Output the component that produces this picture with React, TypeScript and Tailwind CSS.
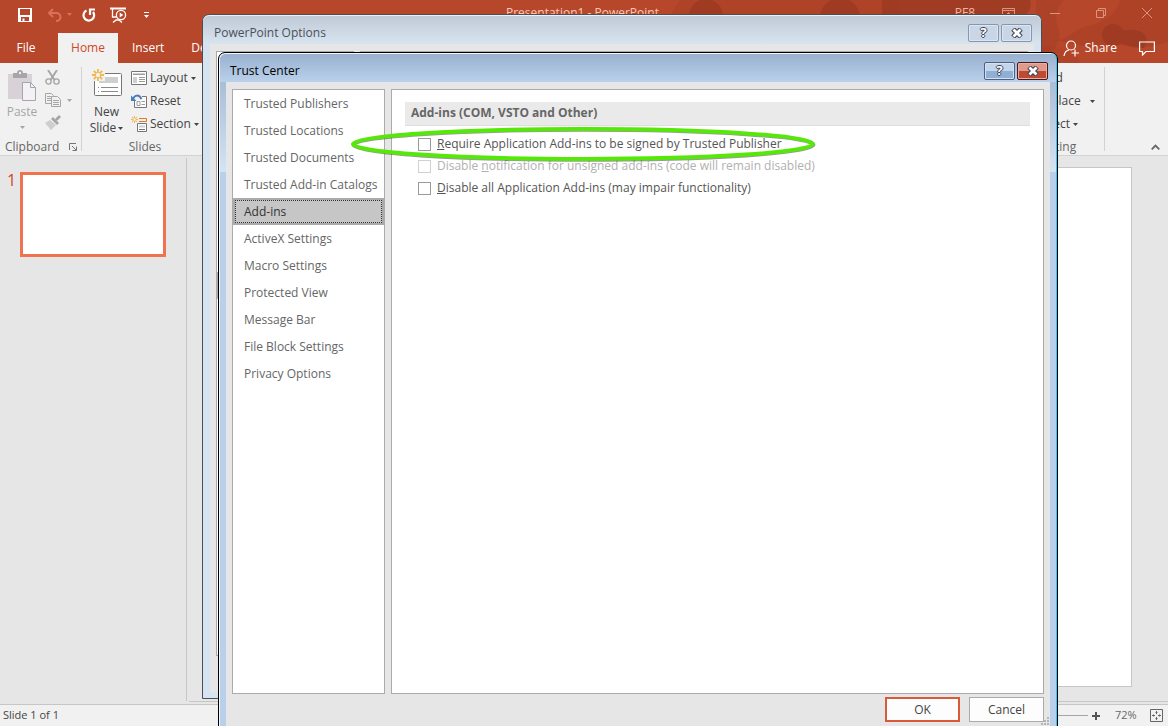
import React, { useState } from 'react';
import clsx from 'clsx';

const categories = [
  'Trusted Publishers',
  'Trusted Locations',
  'Trusted Documents',
  'Trusted Add-in Catalogs',
  'Add-ins',
  'ActiveX Settings',
  'Macro Settings',
  'Protected View',
  'Message Bar',
  'File Block Settings',
  'Privacy Options',
];

const Caret: React.FC<{ className?: string }> = ({ className }) => (
  <svg width="5" height="3" viewBox="0 0 5 3" className={clsx('shrink-0', className)} fill="currentColor">
    <path d="M0 0h5L2.5 3z" />
  </svg>
);

const SaveIcon = () => (
  <svg width="14" height="14" viewBox="0 0 14 14" fill="#fff">
    <path fillRule="evenodd" d="M0 0h14v14H0zM2 1v6h10V1zM3 9v4h1.500v-2.500h2V13H11V9z" />
  </svg>
);

const UndoIcon = () => (
  <svg width="15" height="14" viewBox="0 0 15 14" fill="none" stroke="#d9705a" strokeWidth="2">
    <path d="M6 1L2 5l4 4" />
    <path d="M2 5h7a4 4 0 0 1 4.500 4c0 2-1.500 4-4.500 4" />
  </svg>
);

const RedoIcon = () => (
  <svg width="14" height="14" viewBox="0 0 14 14" fill="none" stroke="#fff" strokeWidth="2.200">
    <path d="M4.500 2.500A5.300 5.300 0 1 0 11 4" />
    <path d="M8 7V1.500h5" />
  </svg>
);

const SlideShowIcon = () => (
  <svg width="17" height="16" viewBox="0 0 17 16" fill="none" stroke="#fff">
    <path d="M0 1.500h16" strokeWidth="2" />
    <path d="M2.500 2v8H7" strokeWidth="1.300" />
    <path d="M3 15.500L6 13h3l3 2.500" strokeWidth="1.300" />
    <circle cx="11" cy="8" r="4.600" fill="#b7472a" strokeWidth="1.300" />
    <path d="M9.700 5.500v5l3.600-2.500z" fill="#fff" stroke="none" />
  </svg>
);

const PasteIcon = () => (
  <svg width="28" height="31" viewBox="0 0 28 31">
    <path d="M0 4h24v25H0z" fill="#d8d2d8" />
    <path d="M5 3h4a3 3 0 0 1 6 0h4v5H5z" fill="#a6a6a6" />
    <circle cx="12" cy="3" r="1.200" fill="#f1f1f1" />
    <path d="M14.500 12.500h8l5 5v13h-13z" fill="#f4f0f8" stroke="#a6a6a6" />
    <path d="M22.500 12.500v5h5" fill="none" stroke="#a6a6a6" />
  </svg>
);

const CutIcon = () => (
  <svg width="15" height="15" viewBox="0 0 15 15" fill="none" stroke="#a6a6a6" strokeWidth="1.400">
    <path d="M3 0l6.500 10M12 0L5.500 10" strokeWidth="2" />
    <circle cx="3.500" cy="11.500" r="2.600" />
    <circle cx="11.500" cy="11.500" r="2.600" />
  </svg>
);

const CopyIcon = () => (
  <svg width="16" height="14" viewBox="0 0 16 14" fill="#f1f1f1" stroke="#a6a6a6">
    <path d="M.5.5h6l2 2v8h-8z" />
    <path d="M2 3.500h4M2 5.500h4M2 7.500h4" />
    <path d="M6.500 3.500h6l3 3v7h-9z" />
    <path d="M8 7.500h6M8 9.500h6M8 11.500h6" />
  </svg>
);

const PainterIcon = () => (
  <svg width="16" height="15" viewBox="0 0 16 15">
    <path d="M0 8l5-3 6 5-5 5z" fill="#d0ccd0" />
    <path d="M6 4l2-2 6 6-2 2z" fill="#a6a6a6" />
    <path d="M10 4l4-4 2 2-4 4z" fill="#a6a6a6" />
  </svg>
);

const Spark: React.FC<{ size: number }> = ({ size }) => (
  <svg width={size} height={size} viewBox="0 0 12 12" stroke="#f0b94d" strokeWidth="1.800" x="0" y="0">
    <path d="M6 0v4M6 8v4M0 6h4M8 6h4M1.800 1.800l2.700 2.700M7.500 7.500l2.700 2.700M10.200 1.800L7.500 4.500M4.500 7.500L1.800 10.200" />
  </svg>
);

const NewSlideIcon = () => (
  <svg width="30" height="28" viewBox="0 0 30 28" fill="none">
    <rect x="2.500" y="4.500" width="27" height="22" rx="1" fill="#fff" stroke="#767676" />
    <path d="M7 8h19v6H7z" fill="#cfcfcf" />
    <path d="M9 18.500h17M9 22.500h17M6 18.500h1M6 22.500h1" stroke="#8a8a8a" />
    <path d="M0 0h13v12H0z" fill="#f1f1f1" />
    <Spark size={12} />
  </svg>
);

const LayoutIcon = () => (
  <svg width="16" height="14" viewBox="0 0 16 14" fill="none" stroke="#767676">
    <path d="M.5.5h15v13H.5z" fill="#fff" />
    <path d="M2 2h12v2H2zM2 6h4v6H2z" fill="#cfcfcf" stroke="none" />
    <path d="M2 3.500h12M8 6.500h6M8 8.500h6M8 10.500h6" stroke="#9a9a9a" />
  </svg>
);

const ResetIcon = () => (
  <svg width="16" height="14" viewBox="0 0 16 14" fill="none" stroke="#767676">
    <path d="M3.500 2.500h12v11h-12z" fill="#fff" />
    <path d="M6 7.500h3v4H6zM10.500 7.500H14M10.500 10.500H14" stroke="#9a9a9a" />
    <path d="M0 0h11v6H0z" fill="#f1f1f1" stroke="none" />
    <path d="M2 5C3.500 1 8 0 10.500 5" stroke="#4a80b8" strokeWidth="2" />
    <path d="M0 1.500V7h5.500z" fill="#4a80b8" stroke="none" />
  </svg>
);

const SectionIcon = () => (
  <svg width="16" height="16" viewBox="0 0 16 16" fill="none">
    <Spark size={7} />
    <path d="M8 2.500h7.500v3H8" stroke="#e07b22" />
    <path d="M6.500 7.500h9v8h-9z" fill="#fff" stroke="#767676" />
    <path d="M8 9.500h6v2H8z" fill="#cfcfcf" />
    <path d="M8 13.500h6" stroke="#767676" />
  </svg>
);

const CaptionButtons: React.FC<{ active?: boolean }> = ({ active }) => (
  <div className="flex gap-[2px]">
    <button
      aria-label="Help"
      className={clsx(
        'flex h-[18px] w-[31px] items-center justify-center rounded-[2px] border text-[13px] font-bold text-white [text-shadow:1px_0_0_#3f4659,-1px_0_0_#3f4659,0_1px_0_#3f4659,0_-1px_0_#3f4659]',
        active
          ? 'border-[#4c6183] bg-linear-to-b from-[#c3d5ea] from-50% to-[#8fb0d4] to-50% shadow-[inset_0_0_0_1px_#d3e1f1]'
          : 'border-[#8796b0] bg-[#c9d6e5] shadow-[inset_0_0_0_1px_#dde6f0]'
      )}
    >
      ?
    </button>
    <button
      aria-label="Close"
      className={clsx(
        'flex h-[18px] w-[31px] items-center justify-center rounded-[2px] border',
        active
          ? 'border-[#471a20] bg-linear-to-b from-[#e09a8c] from-50% to-[#c04a30] to-50% shadow-[inset_0_0_0_1px_#e8b0a5]'
          : 'border-[#8796b0] bg-[#c9d6e5] shadow-[inset_0_0_0_1px_#dde6f0]'
      )}
    >
      <svg width="12" height="10" viewBox="0 0 12 10" fill="none">
        <path d="M2 1l8 8M10 1l-8 8" stroke="#3f4659" strokeWidth="5" />
        <path d="M2.500 1.500l7 7M9.500 1.500l-7 7" stroke="#fff" strokeWidth="2.800" />
      </svg>
    </button>
  </div>
);

const TitleBar = () => (
  <header className="relative bg-[#b7472a] text-white">
    {/* circle pattern behind the title area */}
    <svg className="absolute right-0 top-0 h-[63px] w-[508px]" viewBox="0 0 508 63" fill="#9f3b23">
      <path d="M20 0h220v16H10z" opacity=".35" />
      <circle cx="46" cy="16" r="17" opacity=".9" />
      <circle cx="180" cy="18" r="20" />
      <path d="M222 0h148c2 6 0 12-6 16H222z" opacity=".9" />
      <path d="M376 0h28c-8 8-10 18-6 26 4 12 0 24-12 26h-10z" opacity=".45" />
      <path d="M396 40c14 0 18-12 32-14 14-4 28-10 32-26h48v42c-16 6-30 6-44 2-12 4-30 6-68-4z" opacity=".4" />
      <circle cx="453" cy="35" r="11" />
      <path d="M448 36c14-8 30-8 36-2 4 4 2 10 0 14-12 0-28-4-36-12z" />
      <path d="M376 50c10-6 24-4 30 2 6-2 12 2 14 11h-44z" opacity=".25" />
    </svg>
    <div className="relative flex h-[33px] items-start">
      <div className="flex h-[29px] items-center pl-[18px]">
        <button aria-label="Save"><SaveIcon /></button>
        <button aria-label="Undo" className="ml-[15px] flex items-center gap-[5px] text-[#d9705a]">
          <UndoIcon />
          <Caret />
        </button>
        <button aria-label="Repeat" className="ml-[10px]"><RedoIcon /></button>
        <button aria-label="Start From Beginning" className="ml-[14px]"><SlideShowIcon /></button>
        <button aria-label="Customize Quick Access Toolbar" className="ml-[17px] flex flex-col gap-[2px]">
          <span className="h-px w-[5px] bg-white" />
          <Caret />
        </button>
      </div>
      <div className="flex-1 pl-[357px] pt-[5px] leading-4 text-[#f8c9b8]">Presentation1 - PowerPoint</div>
      <div className="flex items-start pt-[5px] leading-4 text-[#f0b5a3]">
        <span>PF8</span>
        <div className="flex h-[16px] items-center pl-[27px] pr-[16px] text-[#dc9480]">
          <button aria-label="Ribbon Display Options">
            <svg width="13" height="10" viewBox="0 0 13 10" fill="none" stroke="currentColor">
              <path d="M.5.5h12v9H.5zM.5 2.500h12M6.500 9V4.500M4.500 6.500l2-2 2 2" />
            </svg>
          </button>
          <button aria-label="Minimize" className="ml-[35px] h-px w-[10px] bg-current" />
          <button aria-label="Restore" className="ml-[36px]">
            <svg width="10" height="10" viewBox="0 0 10 10" fill="none" stroke="currentColor">
              <path d="M.5 2.500h7v7h-7zM2.500 2V.5h7v7H8" />
            </svg>
          </button>
          <button aria-label="Close" className="ml-[36px]">
            <svg width="10" height="10" viewBox="0 0 10 10" stroke="currentColor">
              <path d="M0 0l10 10M10 0L0 10" />
            </svg>
          </button>
        </div>
      </div>
    </div>
    <nav className="relative flex h-[30px] items-stretch">
      <button className="w-[58px] pr-[6px]">File</button>
      <button className="w-[60px] bg-[#f1f1f1] text-[#d24726]">Home</button>
      <button className="px-[14px]">Insert</button>
      <button className="px-[13px]">Design</button>
      <div className="flex-1" />
      <button className="flex items-center gap-[6px]">
        <svg width="16" height="17" viewBox="0 0 16 17" fill="none" stroke="#fff" strokeWidth="1.200">
          <circle cx="8" cy="5.500" r="4.500" />
          <path d="M1 16c.5-3.500 2.500-5.500 5-6M12 9.500v7M8.500 13H16" />
        </svg>
        Share
      </button>
      <button aria-label="Comments" className="ml-[22px] mr-[13px]">
        <svg width="16" height="15" viewBox="0 0 16 15" fill="none" stroke="#fff" strokeWidth="1.200">
          <path d="M.6 1h14.800v9.500H7L3.500 14v-3.500H.6z" />
        </svg>
      </button>
    </nav>
  </header>
);

const Ribbon = () => (
  <div className="flex h-[93px] border-b border-[#d2d2d2] bg-[#f1f1f1] text-[#444]">
    <section className="flex w-[81px] flex-col">
      <div className="flex h-[76px] items-start pt-[7px] text-[#a6a6a6]">
        <button className="flex w-[43px] flex-col items-center pl-px">
          <PasteIcon />
          <span className="pt-[3px] leading-4">Paste</span>
          <Caret className="mt-[6px]" />
        </button>
        <div className="flex flex-col gap-[8px] pl-[2px]">
          <button aria-label="Cut"><CutIcon /></button>
          <button aria-label="Copy" className="flex items-center gap-[6px]">
            <CopyIcon />
            <Caret />
          </button>
          <button aria-label="Format Painter"><PainterIcon /></button>
        </div>
      </div>
      <div className="flex items-center justify-between pl-[5px] pr-[4px] leading-4 text-[#666]">
        Clipboard
        <svg width="8" height="8" viewBox="0 0 8 8" fill="none" stroke="#767676">
          <path d="M.5 7V.5H7M3 3l4 4M7.500 3.500v4h-4" />
        </svg>
      </div>
    </section>
    <div className="my-[4px] w-px bg-[#d2d2d2]" />
    <section className="flex w-[126px] flex-col">
      <div className="flex h-[76px] items-start pt-[6px]">
        <button className="flex w-[49px] flex-col items-center">
          <NewSlideIcon />
          <span className="pt-[7px] leading-4">New</span>
          <span className="flex items-center gap-[2px] leading-4">Slide <Caret /></span>
        </button>
        <div className="flex flex-col gap-[7px] pt-px">
          <button className="flex items-center gap-[3px] leading-4"><LayoutIcon />Layout <Caret /></button>
          <button className="flex items-center gap-[3px] leading-4"><ResetIcon />Reset</button>
          <button className="flex items-center gap-[3px] leading-4"><SectionIcon />Section <Caret /></button>
        </div>
      </div>
      <div className="text-center leading-4 text-[#666]">Slides</div>
    </section>
    <div className="flex-1" />
    <section className="flex w-[70px] flex-col">
      <div className="flex h-[76px] flex-col items-start gap-[7px] pl-[3px] pt-[7px]">
        <button className="pl-[2px] leading-4">Find</button>
        <button className="flex items-center gap-[9px] leading-4">Replace <Caret /></button>
        <button className="flex items-center gap-[3px] leading-4">Select <Caret /></button>
      </div>
      <div className="pl-[4px] leading-4 text-[#666]">Editing</div>
    </section>
    <div className="my-[4px] w-px bg-[#d2d2d2]" />
    <div className="flex w-[63px] items-end justify-end pb-[5px] pr-[8px]">
      <button aria-label="Collapse the Ribbon">
        <svg width="9" height="6" viewBox="0 0 9 6" fill="none" stroke="#666" strokeWidth="1.800">
          <path d="M.7 5.300L4.500 1.500l3.800 3.800" />
        </svg>
      </button>
    </div>
  </div>
);

const Workspace = () => (
  <main className="flex flex-1 bg-[#e6e6e6] pt-[2px]">
    <aside className="mb-[3px] flex w-[187px] items-start gap-[4px] border-r border-[#c6c6c6] pl-[7px] pt-[14px]">
      <span className="text-base leading-4 text-[#d24726]">1</span>
      <div className="h-[85px] w-[146px] border-3 border-[#f07350] bg-white" />
    </aside>
    <div className="mb-[2px] ml-[2px] flex flex-1 border-b border-[#c6c6c6] pb-[14px] pl-[64px] pr-[36px] pt-[9px]">
      <div className="flex-1 border border-[#c6c6c6] bg-white" />
    </div>
  </main>
);

const StatusBar = () => (
  <footer className="flex h-[22px] items-center border-t border-[#c6c6c6] bg-[#f1f1f1] px-[3px] text-[11px] text-[#444]">
    <span className="flex-1">Slide 1 of 1</span>
    <input
      type="range"
      aria-label="Zoom"
      defaultValue={36}
      className="h-px w-[100px] appearance-none bg-[#a6a6a6]"
    />
    <button aria-label="Zoom In" className="ml-[4px]">
      <svg width="8" height="8" viewBox="0 0 8 8" stroke="#555" strokeWidth="2">
        <path d="M4 0v8M0 4h8" />
      </svg>
    </button>
    <span className="ml-[15px] w-[22px] text-[#666]">72%</span>
    <button aria-label="Fit slide to current window" className="ml-[13px] mr-[2px]">
      <svg width="13" height="13" viewBox="0 0 13 13" fill="none" stroke="#666">
        <path d="M.5.5h12v12H.5z" />
        <path d="M6.500 2v3M6.500 8v3M2 6.500h3M8 6.500h3M5.500 3.500h2M5.500 9.500h2M3.500 5.500v2M9.500 5.500v2" />
      </svg>
    </button>
  </footer>
);

const OptionsWindow = () => (
  <div className="absolute left-[202px] top-[14px] bottom-[27px] flex w-[840px] flex-col rounded-t-[7px] border border-[#4b4f55] bg-[#d6e4f1] px-[7px] pb-[6px] shadow-[inset_0_1px_0_#eef3f8]">
    <div className="-mx-[7px] mt-px flex h-[28px] items-center justify-between rounded-t-[6px] bg-linear-to-b from-[#bfcad6] to-[#d8e4f0] pl-[11px] pr-[9px] text-[#4a5058]">
      <h2 className="pt-[5px]">PowerPoint Options</h2>
      <div className="pt-[6px]"><CaptionButtons /></div>
    </div>
    <div className="flex flex-1 gap-[6px] bg-[#e6e6e6] px-[6px] pb-[36px] pt-[7px]">
      <div className="w-[138px] border border-[#ababab] bg-white pt-[220px]">
        <div className="h-[27px] bg-[#ababab]" />
      </div>
      <div className="flex-1 border border-[#ababab] bg-white" />
    </div>
  </div>
);

const TrustCenter = () => {
  const [selected, setSelected] = useState('Add-ins');
  const [requireSigned, setRequireSigned] = useState(false);
  const [disableAll, setDisableAll] = useState(false);

  const checkbox = 'size-[13px] shrink-0 appearance-none border bg-white checked:bg-[#d24726]';

  return (
    <div className="absolute left-[218px] top-[52px] -bottom-[8px] flex w-[840px] flex-col rounded-t-[7px] border border-black bg-[#b8d0ea] bg-linear-to-b from-[#9ab1cf] via-[#d5e4f4] via-[119px] to-[#b8d0ea] to-[119px] px-[7px] shadow-[inset_1px_1px_0_#f2f7fc,inset_-1px_0_0_#35c6ee]">
      <div className="-mx-[6px] mt-px flex h-[28px] items-center justify-between rounded-t-[6px] bg-linear-to-b from-[#9ab1cf] to-[#b9d1eb] pl-[10px] pr-[8px] text-black">
        <h1 className="pt-[5px]">Trust Center</h1>
        <div className="pt-[6px]"><CaptionButtons active /></div>
      </div>
      <div className="flex flex-1 flex-col bg-[#e6e6e6] px-[6px] pt-[7px]">
        <div className="flex flex-1 gap-[6px]">
          <ul className="w-[153px] border border-[#ababab] bg-white text-[#666]">
            {categories.map((name) => (
              <li key={name}>
                <button
                  onClick={() => setSelected(name)}
                  className={clsx(
                    'flex h-[27px] w-full text-left leading-[21px]',
                    selected === name ? 'border-2 border-[#ababab] bg-[#c6c6c6] text-[#333]' : 'items-center pl-[11px]'
                  )}
                >
                  {selected === name ? (
                    <span className="flex-1 border border-dotted border-[#333] pl-[8px]">{name}</span>
                  ) : (
                    name
                  )}
                </button>
              </li>
            ))}
          </ul>
          <div className="flex-1 border border-[#ababab] bg-white px-[13px] pt-[12px] text-[#555]">
            <h3 className="h-[24px] border-b border-[#dedede] bg-[#eaeaea] pl-[6px] font-bold leading-[22px] text-[#666]">
              Add-ins (COM, VSTO and Other)
            </h3>
            <div className="pl-[13px] pt-[7px]">
              <label className="flex h-[22px] items-center gap-[6px]">
                <input
                  type="checkbox"
                  checked={requireSigned}
                  onChange={(e) => setRequireSigned(e.target.checked)}
                  className={clsx(checkbox, 'border-[#9a9a9a]')}
                />
                <span><u>R</u>equire Application Add-ins to be signed by Trusted Publisher</span>
              </label>
              <label className="flex h-[22px] items-center gap-[6px] text-[#b1b1b1]">
                <input type="checkbox" disabled={!requireSigned} className={clsx(checkbox, 'border-[#d0d0d0]')} />
                <span>Disable <u>n</u>otification for unsigned add-ins (code will remain disabled)</span>
              </label>
              <label className="flex h-[22px] items-center gap-[6px]">
                <input
                  type="checkbox"
                  checked={disableAll}
                  onChange={(e) => setDisableAll(e.target.checked)}
                  className={clsx(checkbox, 'border-[#9a9a9a]')}
                />
                <span><u>D</u>isable all Application Add-ins (may impair functionality)</span>
              </label>
            </div>
          </div>
        </div>
        <div className="flex justify-end gap-[9px] pb-[11px] pt-[3px] text-[#444]">
          <button className="h-[25px] w-[75px] border-2 border-[#d85a38] bg-[#fdfdfd]">OK</button>
          <button className="h-[25px] w-[75px] border border-[#ababab] bg-[#fdfdfd]">Cancel</button>
        </div>
      </div>
      {/* resize grip */}
      <svg className="absolute bottom-[8px] right-[8px]" width="8" height="8" viewBox="0 0 8 8" fill="#b5b5b5">
        <path d="M6 0h2v2H6zM3 3h2v2H3zM6 3h2v2H6zM0 6h2v2H0zM3 6h2v2H3zM6 6h2v2H6z" />
      </svg>
      {/* green callout ring */}
      <svg className="pointer-events-none absolute left-[130px] top-[72px]" width="470" height="40" viewBox="0 0 470 40" fill="none">
        <ellipse cx="234.500" cy="19.800" rx="230" ry="15" stroke="#000" strokeOpacity=".4" strokeWidth="4" />
        <ellipse cx="234" cy="19" rx="230" ry="15" stroke="#55e808" strokeWidth="4" />
      </svg>
    </div>
  );
};

export default function App() {
  return (
    <div className="relative flex min-h-screen flex-col overflow-hidden font-['Open_Sans',sans-serif] text-xs">
      <TitleBar />
      <Ribbon />
      <Workspace />
      <StatusBar />
      <OptionsWindow />
      <TrustCenter />
    </div>
  );
}
